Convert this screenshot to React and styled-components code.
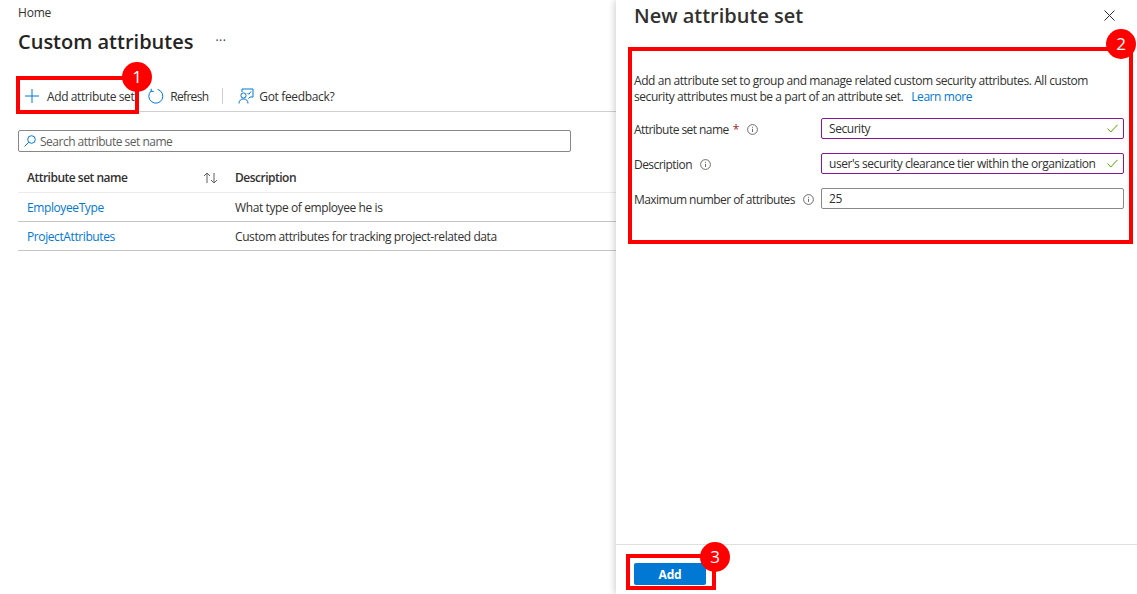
import styled, { createGlobalStyle } from 'styled-components'

const Global = createGlobalStyle`
  html, body {
    margin: 0;
    padding: 0;
    background: #fff;
  }
  body {
    font-family: 'Open Sans', 'Noto Sans', sans-serif;
    font-size: 12px;
    color: #323130;
  }
`

const Page = styled.div`
  position: relative;
  width: 1137px;
  height: 594px;
  display: flex;
  overflow: hidden;
`

const Main = styled.main`
  width: 616px;
  flex: none;
  padding-left: 18px;
  box-sizing: border-box;
`

const Crumb = styled.div`
  height: 26px;
  line-height: 26px;
  letter-spacing: -0.2px;
  color: #323130;
`

const TitleRow = styled.div`
  display: flex;
  align-items: center;
  box-sizing: border-box;
  height: 32px;
  padding-bottom: 2px;
  margin-bottom: 20px;
`

const Title = styled.h1`
  margin: 0;
  font-size: 20px;
  font-weight: 600;
  color: #252423;
`

const More = styled.span`
  margin-left: 22px;
  font-size: 12px;
  line-height: 12px;
  letter-spacing: 0.5px;
  color: #323130;
`

const Toolbar = styled.div`
  display: flex;
  align-items: center;
  box-sizing: border-box;
  height: 34px;
  padding-top: 3px;
  border-bottom: 1px solid #d2d0ce;
`

const ToolButton = styled.div`
  display: flex;
  align-items: center;
  gap: ${(p) => p.$gap || 6}px;
  margin-left: ${(p) => p.$left || 0}px;
  letter-spacing: ${(p) => p.$spacing || -0.4}px;
`

const ToolDivider = styled.div`
  width: 1px;
  height: 16px;
  background: #d2d0ce;
  margin: 0 15px 0 14px;
`

const SearchBox = styled.div`
  display: flex;
  align-items: center;
  gap: 4px;
  box-sizing: border-box;
  width: 553px;
  height: 22px;
  margin-top: 18px;
  padding-left: 5px;
  border: 1px solid #8a8886;
  border-radius: 2px;
  color: #605e5c;
  letter-spacing: -0.5px;
`

const Table = styled.div`
  margin-top: 11px;
`

const Row = styled.div`
  display: grid;
  grid-template-columns: 208px 1fr;
  align-items: center;
  box-sizing: border-box;
  height: ${(p) => p.$height}px;
  padding-left: 9px;
  border-bottom: 1px solid ${(p) => (p.$head ? '#edebe9' : '#c8c6c4')};
  letter-spacing: ${(p) => (p.$head ? -0.5 : -0.4)}px;
  font-weight: ${(p) => (p.$head ? 600 : 400)};
`

const HeadCell = styled.div`
  display: flex;
  align-items: center;
  justify-content: space-between;
  padding-right: 17px;
`

const TableLink = styled.a`
  color: #0078d4;
  text-decoration: none;
`

const Panel = styled.aside`
  flex: 1;
  display: flex;
  flex-direction: column;
  box-shadow: -2px 0 6px rgba(0, 0, 0, 0.16);
  background: #fff;
`

const PanelHead = styled.div`
  display: flex;
  align-items: center;
  justify-content: space-between;
  box-sizing: border-box;
  height: 32px;
  padding: 0 22px 1px 18px;
`

const PanelTitle = styled.h2`
  margin: 0 0 1px;
  font-size: 20px;
  font-weight: 600;
  color: #323130;
`

const PanelBody = styled.div`
  flex: 1;
  padding: 41px 13px 0 18px;
`

const Intro = styled.p`
  margin: 0 0 13px;
  line-height: 16px;
  letter-spacing: -0.43px;
`

const IntroLink = styled.a`
  margin-left: 8px;
  color: #0078d4;
  text-decoration: none;
`

const Field = styled.div`
  display: grid;
  grid-template-columns: 187px 303px;
  align-items: center;
  margin-bottom: ${(p) => p.$gap}px;
`

const Label = styled.label`
  display: flex;
  align-items: center;
  gap: ${(p) => p.$gap}px;
  padding-top: 2px;
  letter-spacing: -0.55px;
`

const Required = styled.span`
  color: #a4262c;
  margin-left: -4px;
`

const Input = styled.div`
  display: flex;
  align-items: center;
  justify-content: space-between;
  box-sizing: border-box;
  height: ${(p) => p.$height}px;
  padding: 0 5px 0 7px;
  border: 1px solid ${(p) => (p.$valid ? '#881798' : '#8a8886')};
  border-radius: 2px;
  letter-spacing: -0.45px;
  white-space: nowrap;
`

const PanelFoot = styled.div`
  box-sizing: border-box;
  height: 50px;
  padding: 18px 0 0 18px;
  border-top: 1px solid #e1dfdd;
`

const AddButton = styled.button`
  display: block;
  width: 72px;
  height: 22px;
  padding: 0;
  border: 0;
  border-radius: 2px;
  background: #0078d4;
  color: #fff;
  font: 700 12px 'Open Sans', sans-serif;
  letter-spacing: -0.2px;
`

const Highlight = styled.div`
  position: absolute;
  left: ${(p) => p.$x}px;
  top: ${(p) => p.$y}px;
  width: ${(p) => p.$w}px;
  height: ${(p) => p.$h}px;
  box-sizing: border-box;
  border: 4px solid #fe0000;
  pointer-events: none;
`

const Badge = styled.div`
  position: absolute;
  left: ${(p) => p.$x - 15}px;
  top: ${(p) => p.$y - 15}px;
  width: 30px;
  height: 30px;
  border-radius: 50%;
  background: #fe0000;
  color: #fff;
  font-size: 17px;
  line-height: 30px;
  text-align: center;
`

const Svg = styled.svg`
  display: block;
  flex: none;
`

const PlusIcon = () => (
  <Svg width="14" height="14" viewBox="0 0 14 14" fill="none" stroke="#0078d4" strokeWidth="1">
    <path d="M7 0v14M0 7h14" />
  </Svg>
)

const RefreshIcon = () => (
  <Svg width="16" height="16" viewBox="0 0 16 16" fill="none" stroke="#0078d4" strokeWidth="1">
    <path d="M9.6 1.4a7 7 0 1 1-6.4 1.5" />
    <path d="M3.2 0.8v2.6h2.6" />
  </Svg>
)

const FeedbackIcon = () => (
  <Svg width="16" height="16" viewBox="0 0 16 16" fill="none" stroke="#0078d4" strokeWidth="1">
    <path d="M4 4V1h11v8h-3l-1.500 1.600" />
    <circle cx="5.500" cy="7.500" r="2.600" />
    <path d="M1 15.500c0-3 2-4.600 4.500-4.600s4.500 1.600 4.500 4.600" />
    <path d="M9.500 5l1.300 1.300L13 3.500" />
  </Svg>
)

const SearchIcon = () => (
  <Svg width="12" height="12" viewBox="0 0 12 12" fill="none" stroke="#0078d4" strokeWidth="1">
    <circle cx="7.500" cy="4.500" r="3.800" />
    <path d="M4.800 7.200L0.600 11.400" />
  </Svg>
)

const SortIcon = () => (
  <Svg width="15" height="12" viewBox="0 0 15 12" fill="none" stroke="#605e5c" strokeWidth="1">
    <path d="M4 11V1M1 4l3-3 3 3" />
    <path d="M11 1v10M8 8l3 3 3-3" />
  </Svg>
)

const InfoIcon = () => (
  <Svg width="11" height="11" viewBox="0 0 11 11" fill="none" stroke="#605e5c" strokeWidth="0.9">
    <circle cx="5.500" cy="5.500" r="4.900" />
    <path d="M5.500 4.800v3.200M5.500 2.800v1" />
  </Svg>
)

const CheckIcon = () => (
  <Svg width="11" height="9" viewBox="0 0 11 9" fill="none" stroke="#57a300" strokeWidth="1">
    <path d="M0.500 4.500L3.800 8L10.500 0.800" />
  </Svg>
)

const CloseIcon = () => (
  <Svg width="11" height="11" viewBox="0 0 11 11" fill="none" stroke="#323130" strokeWidth="1">
    <path d="M0.500 0.500l10 10M10.500 0.500l-10 10" />
  </Svg>
)

export default function App() {
  return (
    <Page>
      <Global />
      <Main>
        <Crumb>Home</Crumb>
        <TitleRow>
          <Title>Custom attributes</Title>
          <More>···</More>
        </TitleRow>
        <Toolbar>
          <ToolButton $gap={8} $left={7}>
            <PlusIcon />
            Add attribute set
          </ToolButton>
          <ToolButton $gap={6} $left={14} $spacing={-0.7}>
            <RefreshIcon />
            Refresh
          </ToolButton>
          <ToolDivider />
          <ToolButton $gap={5} $spacing={-0.35}>
            <FeedbackIcon />
            Got feedback?
          </ToolButton>
        </Toolbar>
        <SearchBox>
          <SearchIcon />
          Search attribute set name
        </SearchBox>
        <Table>
          <Row $head $height={30}>
            <HeadCell>
              Attribute set name
              <SortIcon />
            </HeadCell>
            <span>Description</span>
          </Row>
          <Row $height={29}>
            <TableLink href="#">EmployeeType</TableLink>
            <span>What type of employee he is</span>
          </Row>
          <Row $height={29}>
            <TableLink href="#">ProjectAttributes</TableLink>
            <span>Custom attributes for tracking project-related data</span>
          </Row>
        </Table>
      </Main>
      <Panel>
        <PanelHead>
          <PanelTitle>New attribute set</PanelTitle>
          <CloseIcon />
        </PanelHead>
        <PanelBody>
          <Intro>
            Add an attribute set to group and manage related custom security attributes. All custom
            <br />
            security attributes must be a part of an attribute set.
            <IntroLink href="#">Learn more</IntroLink>
          </Intro>
          <Field $gap={14}>
            <Label $gap={8}>
              Attribute set name <Required>*</Required>
              <InfoIcon />
            </Label>
            <Input $valid $height={21}>
              Security
              <CheckIcon />
            </Input>
          </Field>
          <Field $gap={14}>
            <Label $gap={8}>
              Description
              <InfoIcon />
            </Label>
            <Input $valid $height={21}>
              user's security clearance tier within the organization
              <CheckIcon />
            </Input>
          </Field>
          <Field $gap={0}>
            <Label $gap={8}>
              Maximum number of attributes
              <InfoIcon />
            </Label>
            <Input $height={21}>25</Input>
          </Field>
        </PanelBody>
        <PanelFoot>
          <AddButton>Add</AddButton>
        </PanelFoot>
      </Panel>
      <Highlight $x={16} $y={76} $w={123} $h={38} />
      <Highlight $x={628} $y={47} $w={505} $h={197} />
      <Highlight $x={626} $y={554} $w={90} $h={36} />
      <Badge $x={137} $y={77}>1</Badge>
      <Badge $x={1121} $y={44}>2</Badge>
      <Badge $x={715} $y={557}>3</Badge>
    </Page>
  )
}
